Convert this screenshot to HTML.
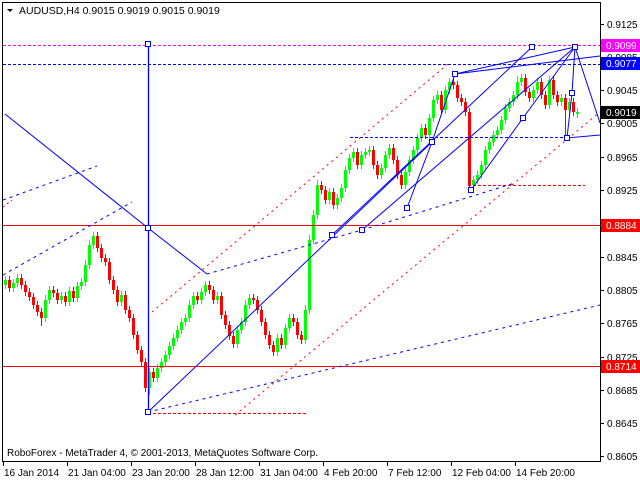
<!DOCTYPE html>
<html><head><meta charset="utf-8"><style>
html,body{margin:0;padding:0;background:#fff;width:640px;height:480px;overflow:hidden}
svg{display:block;font-family:"Liberation Sans",sans-serif;font-size:10px}
</style></head><body>
<svg width="640" height="480" xmlns="http://www.w3.org/2000/svg">
<rect x="0" y="0" width="640" height="480" fill="#fff"/>
<g shape-rendering="crispEdges">
<path fill="#00ff00" d="M4 280h3v5h-3zM12 283h3v5h-3zM16 278h3v5h-3zM44 300h3v18h-3zM48 290h3v10h-3zM60 296h3v4h-3zM68 291h3v11h-3zM76 286h3v12h-3zM80 282h3v4h-3zM84 265h3v17h-3zM88 245h3v20h-3zM92 236h3v9h-3zM120 295h3v7h-3zM148 372h3v16h-3zM156 368h3v10h-3zM160 362h3v6h-3zM164 355h3v7h-3zM168 346h3v9h-3zM172 338h3v8h-3zM176 330h3v8h-3zM180 322h3v8h-3zM184 318h3v4h-3zM188 305h3v13h-3zM192 296h3v9h-3zM200 292h3v8h-3zM204 285h3v7h-3zM216 296h3v4h-3zM236 330h3v14h-3zM240 322h3v8h-3zM244 305h3v17h-3zM248 298h3v7h-3zM276 338h3v14h-3zM284 328h3v17h-3zM288 318h3v10h-3zM304 310h3v30h-3zM308 240h3v70h-3zM312 215h3v25h-3zM316 185h3v30h-3zM328 192h3v8h-3zM336 198h3v7h-3zM340 188h3v10h-3zM344 170h3v18h-3zM348 158h3v12h-3zM352 152h3v6h-3zM360 155h3v10h-3zM364 152h3v3h-3zM368 150h3v2h-3zM380 168h3v7h-3zM384 155h3v13h-3zM388 148h3v7h-3zM404 172h3v13h-3zM408 160h3v12h-3zM412 150h3v10h-3zM416 138h3v12h-3zM420 128h3v10h-3zM428 118h3v17h-3zM432 100h3v18h-3zM436 95h3v5h-3zM444 90h3v20h-3zM448 82h3v8h-3zM472 180h3v5h-3zM476 175h3v5h-3zM480 165h3v10h-3zM484 150h3v15h-3zM488 142h3v8h-3zM492 135h3v7h-3zM496 130h3v5h-3zM500 120h3v10h-3zM504 108h3v12h-3zM508 102h3v6h-3zM512 95h3v7h-3zM516 82h3v13h-3zM520 78h3v4h-3zM532 90h3v8h-3zM536 82h3v8h-3zM548 80h3v25h-3zM560 98h3v4h-3zM568 102h3v8h-3zM576 112h3v2h-3z"/>
<path fill="none" stroke="#00ff00" d="M5.5 276V289M13.5 279V292M17.5 274V287M45.5 295V322M49.5 286V304M61.5 292V304M69.5 287V306M77.5 282V302M81.5 278V290M85.5 260V286M89.5 240V269M93.5 232V249M121.5 291V306M149.5 368V395M157.5 364V382M161.5 358V372M165.5 351V366M169.5 342V359M173.5 334V350M177.5 326V342M181.5 318V334M185.5 314V326M189.5 300V322M193.5 292V309M201.5 288V304M205.5 281V296M217.5 292V304M237.5 326V348M241.5 318V334M245.5 300V326M249.5 294V309M277.5 334V356M285.5 324V349M289.5 314V332M305.5 305V344M309.5 235V314M313.5 210V244M317.5 180V219M329.5 188V204M337.5 194V209M341.5 184V202M345.5 166V192M349.5 154V174M353.5 148V162M361.5 151V169M365.5 148V159M369.5 146V156M381.5 164V179M385.5 151V172M389.5 144V159M405.5 168V189M409.5 156V176M413.5 146V164M417.5 134V154M421.5 124V142M429.5 114V139M433.5 96V122M437.5 91V104M445.5 86V114M449.5 78V94M473.5 176V189M477.5 171V184M481.5 161V179M485.5 146V169M489.5 138V154M493.5 131V146M497.5 126V139M501.5 116V134M505.5 104V124M509.5 98V112M513.5 91V106M517.5 76V99M521.5 74V86M533.5 86V102M537.5 78V94M549.5 76V109M561.5 94V106M569.5 98V114M577.5 108V118"/>
<path fill="#ff0000" d="M8 280h3v8h-3zM20 278h3v7h-3zM24 285h3v7h-3zM28 292h3v5h-3zM32 297h3v8h-3zM36 305h3v7h-3zM40 312h3v6h-3zM52 290h3v3h-3zM56 293h3v7h-3zM64 296h3v6h-3zM72 291h3v7h-3zM96 236h3v12h-3zM100 248h3v10h-3zM104 258h3v4h-3zM108 262h3v18h-3zM112 280h3v10h-3zM116 290h3v12h-3zM124 295h3v15h-3zM128 310h3v8h-3zM132 318h3v17h-3zM136 335h3v15h-3zM140 350h3v12h-3zM144 362h3v26h-3zM152 372h3v6h-3zM196 296h3v4h-3zM208 285h3v5h-3zM212 290h3v10h-3zM220 296h3v19h-3zM224 315h3v10h-3zM228 325h3v11h-3zM232 336h3v8h-3zM252 298h3v2h-3zM256 300h3v10h-3zM260 310h3v12h-3zM264 322h3v13h-3zM268 335h3v10h-3zM272 345h3v7h-3zM280 338h3v7h-3zM292 318h3v4h-3zM296 322h3v13h-3zM300 335h3v5h-3zM320 185h3v5h-3zM324 190h3v10h-3zM332 192h3v13h-3zM356 152h3v13h-3zM372 150h3v15h-3zM376 165h3v10h-3zM392 148h3v12h-3zM396 160h3v15h-3zM400 175h3v10h-3zM424 128h3v7h-3zM440 95h3v15h-3zM452 82h3v3h-3zM456 85h3v13h-3zM460 98h3v4h-3zM464 102h3v10h-3zM468 112h3v73h-3zM524 78h3v14h-3zM528 92h3v6h-3zM540 82h3v13h-3zM544 95h3v10h-3zM552 80h3v15h-3zM556 95h3v7h-3zM564 98h3v12h-3zM572 102h3v10h-3z"/>
<path fill="none" stroke="#ff0000" d="M9.5 276V292M21.5 274V289M25.5 281V296M29.5 288V301M33.5 293V309M37.5 301V316M41.5 308V326M53.5 286V297M57.5 289V304M65.5 292V306M73.5 287V302M97.5 232V252M101.5 244V262M105.5 254V266M109.5 258V284M113.5 276V294M117.5 286V306M125.5 291V314M129.5 306V322M133.5 314V339M137.5 331V354M141.5 346V366M145.5 358V392M153.5 368V382M197.5 292V304M209.5 281V294M213.5 286V304M221.5 292V319M225.5 311V329M229.5 321V340M233.5 332V348M253.5 294V304M257.5 296V314M261.5 306V326M265.5 318V339M269.5 331V349M273.5 341V356M281.5 334V349M293.5 314V326M297.5 318V339M301.5 331V344M321.5 181V194M325.5 186V204M333.5 188V209M357.5 148V169M373.5 146V169M377.5 161V179M393.5 144V164M397.5 156V179M401.5 171V189M425.5 124V139M441.5 91V114M453.5 78V89M457.5 81V102M461.5 94V106M465.5 98V116M469.5 108V190M525.5 74V96M529.5 88V102M541.5 78V99M545.5 91V109M553.5 76V99M557.5 91V106M565.5 94V138M573.5 98V116"/>
</g>
<line x1="3" y1="45.5" x2="600" y2="45.5" stroke="#ff00ff" stroke-dasharray="3,2"/>
<line x1="3" y1="64.5" x2="600" y2="64.5" stroke="#0000ff" stroke-dasharray="3,2"/>
<line x1="3" y1="225.5" x2="600" y2="225.5" stroke="#ff0000"/>
<line x1="3" y1="366.5" x2="600" y2="366.5" stroke="#ff0000"/>
<line x1="350" y1="137.5" x2="567" y2="137.5" stroke="#0000ff" stroke-dasharray="3,2"/>
<line x1="148" y1="413.5" x2="308" y2="413.5" stroke="#ff0000" stroke-dasharray="3,2"/>
<line x1="468" y1="185.5" x2="585" y2="185.5" stroke="#ff0000" stroke-dasharray="3,2"/>
<g fill="none">
<line x1="152" y1="312" x2="448" y2="64" stroke="#ff0000" stroke-dasharray="2,4"/>
<line x1="235" y1="415" x2="600" y2="112" stroke="#ff0000" stroke-dasharray="2,4"/>
<line x1="3" y1="207" x2="12" y2="200" stroke="#ff0000" stroke-dasharray="2,3"/>
<line x1="3" y1="200" x2="97" y2="166" stroke="#0000ff" stroke-dasharray="3,4"/>
<line x1="3" y1="275" x2="132" y2="202" stroke="#0000ff" stroke-dasharray="3,4"/>
<line x1="207" y1="274" x2="362" y2="230" stroke="#0000ff" stroke-dasharray="3,4"/>
<line x1="362" y1="230" x2="515" y2="183" stroke="#0000ff" stroke-dasharray="3,4"/>
<line x1="148" y1="412" x2="600" y2="305" stroke="#0000ff" stroke-dasharray="3,4"/>
<line x1="148.5" y1="44" x2="148.5" y2="412" stroke="#0000ff" stroke-width="1.3"/>
<polyline points="5,114 148,228 207,274" stroke="#0000ff"/>
<line x1="148" y1="412" x2="432" y2="142" stroke="#0000ff"/>
<line x1="332" y1="235" x2="532" y2="47" stroke="#0000ff"/>
<line x1="362" y1="230" x2="575" y2="47" stroke="#0000ff"/>
<polyline points="407,208 432,142 455,74 600,56" stroke="#0000ff"/>
<polyline points="471,190 523,118 575,47" stroke="#0000ff"/>
<polyline points="600,123 575,47 572,93 567,138 600,135" stroke="#0000ff"/>
<line x1="455" y1="74" x2="575" y2="47" stroke="#0000ff"/>
<g stroke="#0000ff" fill="#fff" shape-rendering="crispEdges">
<rect x="145.5" y="41.5" width="5" height="5"/><rect x="145.5" y="225.5" width="5" height="5"/><rect x="145.5" y="409.5" width="5" height="5"/>
<rect x="329.5" y="232.5" width="5" height="5"/><rect x="359.5" y="227.5" width="5" height="5"/><rect x="404.5" y="205.5" width="5" height="5"/>
<rect x="429.5" y="139.5" width="5" height="5"/><rect x="452.5" y="71.5" width="5" height="5"/><rect x="468.5" y="187.5" width="5" height="5"/>
<rect x="520.5" y="115.5" width="5" height="5"/><rect x="529.5" y="44.5" width="5" height="5"/><rect x="572.5" y="44.5" width="5" height="5"/>
<rect x="569.5" y="90.5" width="5" height="5"/><rect x="564.5" y="135.5" width="5" height="5"/>
</g>
</g>
<rect x="2.5" y="2.5" width="598" height="459" fill="none" stroke="#000" shape-rendering="crispEdges"/>
<path d="M7,9 L13,9 L10,12 Z" fill="#000"/>
<text x="19" y="14" fill="#000" font-size="10.5">AUDUSD,H4  0.9015 0.9019 0.9015 0.9019</text>
<text x="7" y="456" fill="#000">RoboForex - MetaTrader 4, © 2001-2013, MetaQuotes Software Corp.</text>
<g fill="#000" shape-rendering="crispEdges">
<rect x="601" y="24" width="3" height="1"/><rect x="601" y="57" width="3" height="1"/><rect x="601" y="90" width="3" height="1"/><rect x="601" y="123" width="3" height="1"/><rect x="601" y="157" width="3" height="1"/><rect x="601" y="190" width="3" height="1"/><rect x="601" y="257" width="3" height="1"/><rect x="601" y="290" width="3" height="1"/><rect x="601" y="323" width="3" height="1"/><rect x="601" y="357" width="3" height="1"/><rect x="601" y="390" width="3" height="1"/><rect x="601" y="423" width="3" height="1"/><rect x="601" y="456" width="3" height="1"/>
<rect x="3" y="462" width="1" height="4"/><rect x="67" y="462" width="1" height="4"/><rect x="131" y="462" width="1" height="4"/><rect x="195" y="462" width="1" height="4"/><rect x="259" y="462" width="1" height="4"/><rect x="323" y="462" width="1" height="4"/><rect x="387" y="462" width="1" height="4"/><rect x="451" y="462" width="1" height="4"/><rect x="515" y="462" width="1" height="4"/>
</g>
<g fill="#000">
<text x="607" y="28">0.9125</text><text x="607" y="61">0.9085</text><text x="607" y="94">0.9045</text><text x="607" y="127">0.9005</text><text x="607" y="161">0.8965</text><text x="607" y="194">0.8925</text><text x="607" y="261">0.8845</text><text x="607" y="294">0.8805</text><text x="607" y="327">0.8765</text><text x="607" y="361">0.8725</text><text x="607" y="394">0.8685</text><text x="607" y="427">0.8645</text><text x="607" y="460">0.8605</text>
<text x="4" y="476">16 Jan 2014</text><text x="68" y="476">21 Jan 04:00</text><text x="132" y="476">23 Jan 20:00</text><text x="196" y="476">28 Jan 12:00</text><text x="260" y="476">31 Jan 04:00</text><text x="324" y="476">4 Feb 20:00</text><text x="388" y="476">7 Feb 12:00</text><text x="452" y="476">12 Feb 04:00</text><text x="516" y="476">14 Feb 20:00</text>
</g>
<rect x="601" y="39" width="39" height="13" fill="#ff00ff"/><text x="606" y="49" fill="#fff">0.9099</text>
<rect x="601" y="57" width="39" height="13" fill="#0000ff"/><text x="606" y="67" fill="#fff">0.9077</text>
<rect x="601" y="106" width="39" height="13" fill="#000"/><text x="606" y="116" fill="#fff">0.9019</text>
<rect x="601" y="219" width="39" height="13" fill="#ff0000"/><text x="606" y="229" fill="#fff">0.8884</text>
<rect x="601" y="360" width="39" height="13" fill="#ff0000"/><text x="606" y="370" fill="#fff">0.8714</text>
</svg>
</body></html>
